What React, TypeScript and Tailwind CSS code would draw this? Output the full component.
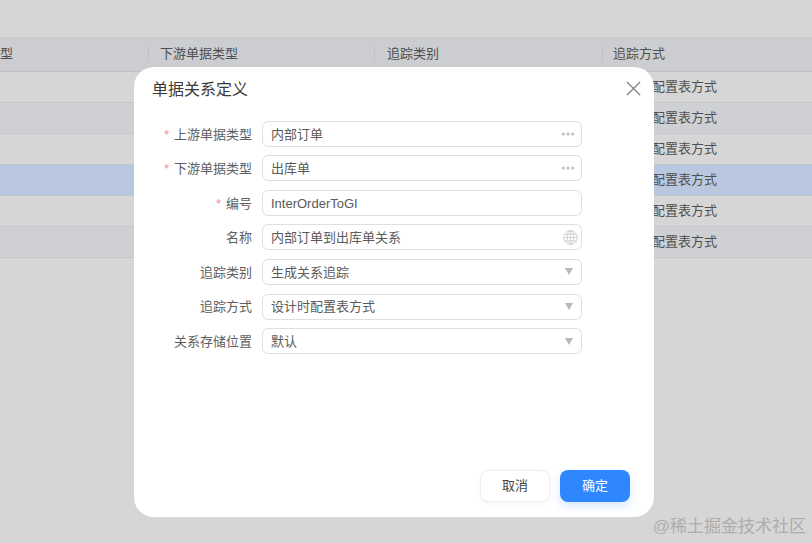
import { MoreHorizontal, X } from 'lucide-react';

const font = "font-['Liberation_Sans','Noto_Sans_CJK_SC',sans-serif]";

const rows = [
  'bg-[#d6d6d6]',
  'bg-[#cfd0d3]',
  'bg-[#d6d6d6]',
  'bg-[#b9c8df]',
  'bg-[#d6d6d6]',
  'bg-[#cfd0d3]',
];

function TableBackdrop() {
  return (
    <div className="pt-[37px] text-[13px] text-[#4f4f4f]">
      <div className="h-[35px] bg-[#cccdd1] border-b border-[#bfc0c4] grid grid-cols-[148px_226px_228px_1fr] items-center">
        <div className="text-right pr-[137px]">型</div>
        <div className="h-[14px] flex items-center pl-[11px] border-l border-[#c0c1c5]">下游单据类型</div>
        <div className="h-[14px] flex items-center pl-[12px] border-l border-[#c0c1c5]">追踪类别</div>
        <div className="h-[14px] flex items-center pl-[10px] border-l border-[#c0c1c5]">追踪方式</div>
      </div>
      {rows.map((bg, i) => (
        <div key={i} className={`h-[31px] border-b border-[#c4c5c8] grid grid-cols-[148px_226px_228px_1fr] items-center ${bg}`}>
          <div />
          <div />
          <div />
          <div className="pl-[11px]">设计时配置表方式</div>
        </div>
      ))}
    </div>
  );
}

function GlobeIcon() {
  return (
    <svg width="15" height="15" viewBox="0 0 15 15" fill="none" stroke="#c8c8c8" strokeWidth="0.8">
      <circle cx="7.5" cy="7.5" r="6.8" />
      <ellipse cx="7.5" cy="7.5" rx="3.2" ry="6.8" />
      <path d="M7.5 0.7v13.6M0.7 7.5h13.6M1.6 4.2h11.8M1.6 10.8h11.8" />
    </svg>
  );
}

function Field({ label, required, value, icon }: { label: string; required?: boolean; value: string; icon?: 'more' | 'globe' | 'caret' }) {
  return (
    <div className="flex items-center h-[26px]">
      <label className="w-[118px] pt-[1px] text-right text-[13px] text-[#5e5e5e]">
        {required && <span className="text-[#f29191] mr-[5px]">*</span>}
        {label}
      </label>
      <div className="ml-[10px] w-[320px] h-[26px] flex items-center justify-between pl-[8px] border border-[#dfdfdf] rounded-[6px] text-[13px] text-[#5a5a5a]">
        <span className="pt-[1px]">{value}</span>
        {icon === 'more' && <MoreHorizontal className="w-[16px] h-[16px] mr-[5px] text-[#bdbdbd]" strokeWidth={2.5} />}
        {icon === 'globe' && <span className="mr-[3px] flex"><GlobeIcon /></span>}
        {icon === 'caret' && (
          <svg width="8" height="7" viewBox="0 0 8 7" className="mr-[8px]">
            <path d="M0 0h8L4 7z" fill="#b8b8b8" />
          </svg>
        )}
      </div>
    </div>
  );
}

function Dialog() {
  return (
    <div className="absolute left-[134px] top-[67px] w-[520px] h-[450px] bg-white rounded-[20px] flex flex-col">
      <div className="h-[53.8px] pl-[18px] pr-[8px] pb-[7px] flex items-center justify-between">
        <span className="text-[16px] text-[#3a3a3a]">单据关系定义</span>
        <X className="w-[25px] h-[25px] mb-[3px] text-[#808080]" strokeWidth={1.15} />
      </div>
      <div className="flex flex-col gap-[8.55px]">
        <Field label="上游单据类型" required value="内部订单" icon="more" />
        <Field label="下游单据类型" required value="出库单" icon="more" />
        <Field label="编号" required value="InterOrderToGI" />
        <Field label="名称" value="内部订单到出库单关系" icon="globe" />
        <Field label="追踪类别" value="生成关系追踪" icon="caret" />
        <Field label="追踪方式" value="设计时配置表方式" icon="caret" />
        <Field label="关系存储位置" value="默认" icon="caret" />
      </div>
      <div className="mt-auto mb-[15px] pr-[24px] flex justify-end gap-[10px]">
        <button className="w-[70px] h-[32px] rounded-[8px] bg-white border border-[#eeeeee] text-[13px] text-[#444] shadow-[0_2px_6px_rgba(0,0,0,0.04)]">取消</button>
        <button className="w-[70px] h-[32px] rounded-[8px] bg-[#2f87ff] text-[13px] text-white shadow-[0_4px_10px_rgba(47,135,255,0.2)]">确定</button>
      </div>
    </div>
  );
}

export default function App() {
  return (
    <div className={`relative w-[812px] h-[543px] overflow-hidden bg-[#d6d6d6] ${font}`}>
      <TableBackdrop />
      <Dialog />
      <div className="absolute right-[6px] bottom-[6px] text-[17px] leading-[20px] text-[#adadad]">@稀土掘金技术社区</div>
    </div>
  );
}
